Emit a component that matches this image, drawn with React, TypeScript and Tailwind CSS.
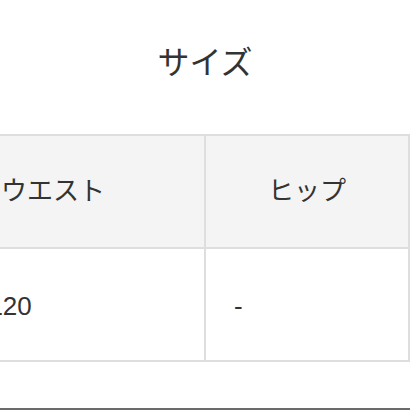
import React from "react";

const font = { fontFamily: '"Liberation Sans", "Noto Sans CJK JP", sans-serif' };

export default function App() {
  return (
    <div className="w-[410px] h-[410px] overflow-hidden bg-white text-[#333]" style={font}>
      {/* Title */}
      <div className="pt-[39px] h-[134px]">
        <h2 className="text-center text-[32px] leading-[48px] font-normal">サイズ</h2>
      </div>

      {/* Size table */}
      <div className="-ml-[100px] grid grid-cols-[304px_204px] border-t-2 border-l-2 border-[#dedede]">
        <div className="h-[113px] flex items-center justify-center bg-[#f4f4f4] border-r-2 border-b-2 border-[#dedede] text-[26px]">
          ウエスト
        </div>
        <div className="h-[113px] flex items-center justify-center bg-[#f4f4f4] border-r-2 border-b-2 border-[#dedede] text-[26px]">
          ヒップ
        </div>
        <div className="h-[113px] flex items-center pl-[17px] pt-[4px] border-r-2 border-b-2 border-[#dedede] text-[26px]">
          100〜120
        </div>
        <div className="h-[113px] flex items-center pl-[28px] pt-[4px] border-r-2 border-b-2 border-[#dedede] text-[26px]">
          -
        </div>
      </div>

      <div className="mt-[46px] h-[2px] bg-[#6b6b6b]" />
    </div>
  );
}
